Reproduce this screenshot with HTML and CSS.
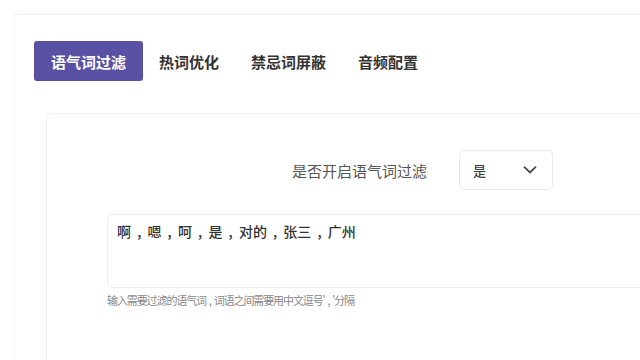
FILE: index.html
```html
<!DOCTYPE html>
<html lang="zh-CN">
<head>
<meta charset="utf-8">
<title>语气词过滤</title>
<link rel="stylesheet" href="styles.css">
</head>
<body>
<div class="page">
  <div class="outer-card">
    <div class="tabs">
      <div class="tab active">语气词过滤</div>
      <div class="tab">热词优化</div>
      <div class="tab">禁忌词屏蔽</div>
      <div class="tab">音频配置</div>
    </div>
    <div class="inner-card">
      <div class="form-row">
        <div class="label">是否开启语气词过滤</div>
        <div class="select">
          <span class="select-value">是</span>
          <svg class="chevron" width="14" height="8" viewBox="0 0 14 8"><path d="M1.5 1.2 L7 6.5 L12.5 1.2" fill="none" stroke="#4a4a4a" stroke-width="1.8" stroke-linecap="round" stroke-linejoin="round"/></svg>
        </div>
      </div>
      <div class="textarea">啊 , 嗯 , 呵 , 是 , 对的 , 张三 , 广州</div>
      <div class="helper">输入需要过滤的语气词 , 词语之间需要用中文逗号' , '分隔</div>
    </div>
  </div>
</div>
</body>
</html>
```

FILE: styles.css
```css
html, body {
  margin: 0;
  padding: 0;
  background: #ffffff;
  font-family: "Noto Sans CJK SC", "Noto Sans", sans-serif;
  color: #333;
}

.page {
  padding: 14px 0 0 14px;
  height: 346px;
  overflow: hidden;
}

.outer-card {
  border-top: 1px solid #f1f1f4;
  border-left: 1px solid #f1f1f4;
  border-top-left-radius: 4px;
  box-shadow: 0 0 3px rgba(0, 0, 0, 0.03);
  padding: 26px 0 0 19px;
  height: 400px;
}

.tabs {
  display: flex;
  height: 40px;
}

.tab {
  padding: 0 16px;
  height: 40px;
  display: flex;
  align-items: center;
  font-size: 15px;
  font-weight: 700;
  color: #333;
  border-radius: 3px;
  white-space: nowrap;
}

.tab.active {
  background: #5952a4;
  color: #ffffff;
  padding: 0 17px;
}

.inner-card {
  margin: 32px 0 0 12px;
  border-top: 1px solid #f0f0f4;
  border-left: 1px solid #f0f0f4;
  border-top-left-radius: 6px;
  padding: 36px 0 0 60px;
  height: 300px;
}

.form-row {
  display: flex;
  align-items: center;
  height: 40px;
}

.label {
  width: 320px;
  text-align: right;
  font-size: 15px;
  color: #555;
  margin-right: 32px;
  white-space: nowrap;
}

.select {
  box-sizing: border-box;
  width: 94px;
  height: 40px;
  border: 1px solid #e9e9ee;
  border-radius: 5px;
  display: flex;
  align-items: center;
  justify-content: space-between;
  padding: 0 15px 0 13px;
}

.select-value {
  font-size: 13px;
  color: #3a3a3a;
  font-weight: 500;
}

.chevron {
  display: block;
}

.textarea {
  box-sizing: border-box;
  margin-top: 24px;
  width: 700px;
  height: 74px;
  border: 1px solid #ececf1;
  border-radius: 5px;
  padding: 8px 9px;
  font-size: 14px;
  line-height: 16px;
  word-spacing: 3px;
  color: #333;
  font-weight: 500;
  white-space: nowrap;
}

.helper {
  margin-top: 4px;
  font-size: 11px;
  line-height: 16px;
  letter-spacing: -1.1px;
  word-spacing: 1.5px;
  color: #888;
  white-space: nowrap;
}
```
